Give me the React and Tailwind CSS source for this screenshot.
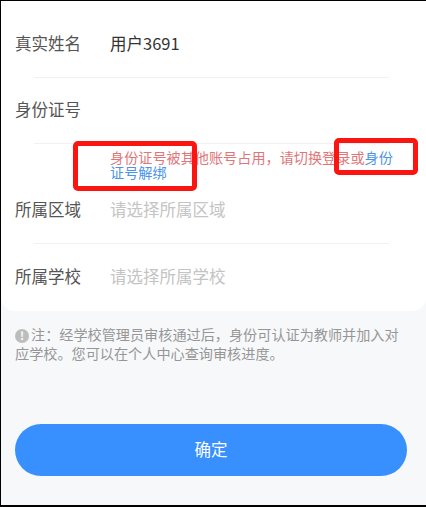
const font = { fontFamily: '"Noto Sans CJK SC", "Noto Sans", sans-serif' };

function Row({ label, children, divider = true }) {
  return (
    <div className="flex flex-col h-[66px]">
      <div className="flex flex-1 items-center pl-[14px] pb-[2px]">
        <span className="w-[95px] shrink-0 text-[16.5px] text-[#555555]">{label}</span>
        {children}
      </div>
      {divider && <div className="ml-[33px] mr-[37px] h-px bg-[#f1f1f1]" />}
    </div>
  );
}

export default function App() {
  return (
    <div
      className="relative h-[507px] w-[426px] overflow-hidden border-l border-t border-b-2 border-black bg-[#f6f8fa]"
      style={font}
    >
      <div className="rounded-b-[14px] bg-white pt-[11px] h-[310px]">
        <Row label="真实姓名">
          <span className="text-[16.5px] text-[#333333]">用户3691</span>
        </Row>
        <Row label="身份证号" />
        <div className="h-[34px] pl-[109px] pr-[30px] pt-[6px] text-[14.15px] leading-[15px] text-[#e0767a]">
          身份证号被其他账号占用，请切换登录或<span className="text-[#4a94e8]">身份证号解绑</span>
        </div>
        <Row label="所属区域">
          <span className="text-[16.5px] text-[#c4c4c4]">请选择所属区域</span>
        </Row>
        <Row label="所属学校" divider={false}>
          <span className="text-[16.5px] text-[#c4c4c4]">请选择所属学校</span>
        </Row>
      </div>

      <p className="mt-[14px] ml-[14px] mr-[22px] text-[14.15px] leading-[19px] text-[#969696]">
        <span className="mr-[2px] inline-flex h-[14px] w-[14px] items-center justify-center rounded-full bg-[#bdbdbd] text-[11px] font-bold leading-none text-white">!</span>
        注：经学校管理员审核通过后，身份可认证为教师并加入对应学校。您可以在个人中心查询审核进度。
      </p>

      <div className="mt-[61px] ml-[14px] mr-[19px]">
        <button className="flex h-[52px] w-full items-center justify-center rounded-[26px] bg-[#3890ff] pb-[2px] text-[16.5px] text-white">
          确定
        </button>
      </div>

      <div className="absolute left-[72px] top-[140px] h-[50px] w-[124px] rounded-[5px] border-[5px] border-[#fb1410]" />
      <div className="absolute left-[333px] top-[137px] h-[37px] w-[84px] rounded-[5px] border-[5px] border-[#fb1410]" />
    </div>
  );
}
